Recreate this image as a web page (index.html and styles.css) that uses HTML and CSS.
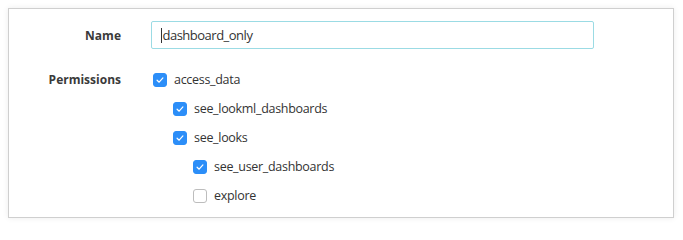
FILE: index.html
```html
<!DOCTYPE html>
<html>
<head>
<meta charset="utf-8">
<link rel="stylesheet" href="styles.css">
</head>
<body>
<div class="panel">
  <div class="row row-name">
    <label class="label">Name</label>
    <div class="control">
      <div class="input"><span class="caret"></span>dashboard_only</div>
    </div>
  </div>
  <div class="row row-perms">
    <div class="label label-perms">Permissions</div>
    <ul class="tree">
      <li class="item lvl0"><span class="cb on"><svg viewBox="0 0 14 14"><path d="M3.6 7.3 L6 9.6 L10.4 4.6"/></svg></span>access_data</li>
      <li class="item lvl1"><span class="cb on"><svg viewBox="0 0 14 14"><path d="M3.6 7.3 L6 9.6 L10.4 4.6"/></svg></span>see_lookml_dashboards</li>
      <li class="item lvl1"><span class="cb on"><svg viewBox="0 0 14 14"><path d="M3.6 7.3 L6 9.6 L10.4 4.6"/></svg></span>see_looks</li>
      <li class="item lvl2"><span class="cb on"><svg viewBox="0 0 14 14"><path d="M3.6 7.3 L6 9.6 L10.4 4.6"/></svg></span>see_user_dashboards</li>
      <li class="item lvl2"><span class="cb"></span>explore</li>
      <li class="item lvl3"><span class="cb"></span></li>
    </ul>
  </div>
</div>
</body>
</html>
```
FILE: styles.css
```css
html, body {
  margin: 0;
  padding: 0;
  background: #ffffff;
}
body {
  padding: 8px;
  font-family: "Open Sans", "Liberation Sans", sans-serif;
  color: #333333;
}
.panel {
  box-sizing: border-box;
  width: 666px;
  height: 210px;
  border: 1px solid #cfcfcf;
  background: #fff;
  box-shadow: 0 0 6px rgba(0,0,0,0.08);
  overflow: hidden;
  padding-top: 12px;
}
.row {
  display: grid;
  grid-template-columns: 112px 1fr;
  column-gap: 30px;
}
.row-name {
  align-items: center;
}
.label {
  text-align: right;
  font-weight: 700;
  font-size: 12px;
  color: #3a3a3a;
}
.input {
  box-sizing: border-box;
  width: 443px;
  height: 28px;
  border: 1px solid #9bdbe4;
  border-radius: 2px;
  padding-left: 9px;
  font-size: 13px;
  letter-spacing: -0.5px;
  line-height: 26px;
  color: #333;
  display: flex;
  align-items: center;
}
.caret {
  display: inline-block;
  width: 1px;
  height: 15px;
  background: #333;
  margin-right: 0.5px;
}
.row-perms {
  margin-top: 16px;
}
.label-perms {
  line-height: 29px;
}
.tree {
  list-style: none;
  margin: 0;
  padding: 0;
}
.item {
  display: flex;
  align-items: center;
  height: 29px;
  font-size: 12.5px;
  letter-spacing: -0.3px;
  color: #333;
}
.lvl0 { padding-left: 2px; }
.lvl1 { padding-left: 22px; }
.lvl2 { padding-left: 42px; }
.lvl3 { padding-left: 62px; }
.cb {
  box-sizing: border-box;
  width: 14px;
  height: 14px;
  border-radius: 3px;
  border: 1px solid #bdbdbd;
  background: #fff;
  margin-right: 7px;
  display: inline-flex;
  flex-shrink: 0;
}
.cb.on {
  background: #2c8ef8;
  border-color: #2c8ef8;
}
.cb svg {
  width: 12px;
  height: 12px;
  fill: none;
  stroke: #fff;
  stroke-width: 1.4;
  stroke-linecap: round;
  stroke-linejoin: round;
}
```
